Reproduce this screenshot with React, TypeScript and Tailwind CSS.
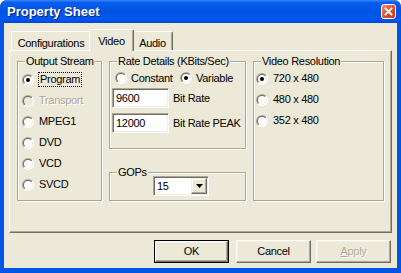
import React from "react";

const FONT = "font-['Liberation_Sans',Arial,sans-serif] text-[11px] tracking-[-0.3px] text-black";

function Radio({ checked, disabled }: { checked?: boolean; disabled?: boolean }) {
  return (
    <svg width="12" height="12" viewBox="0 0 12 12" className="shrink-0">
      <circle cx="6" cy="6" r="6" fill="url(#radioOuter)" />
      <circle cx="6" cy="6" r="5" fill="url(#radioInner)" />
      <circle cx="6" cy="6" r="4" fill={disabled ? "#ECE9D8" : "#FFFFFF"} />
      {checked && <circle cx="6" cy="6" r="2" fill="#000" />}
    </svg>
  );
}

function RadioRow({
  label,
  checked,
  disabled,
  focused,
}: {
  label: string;
  checked?: boolean;
  disabled?: boolean;
  focused?: boolean;
}) {
  return (
    <div className="flex h-[21px] items-center">
      <Radio checked={checked} disabled={disabled} />
      <span
        className={
          "ml-[5px] leading-[13px] " +
          (disabled ? "text-[#ACA899] [text-shadow:1px_1px_0_#fff]" : "") +
          (focused ? " outline outline-1 outline-dotted outline-black px-[1px] -ml-[-4px]" : "")
        }
      >
        {label}
      </span>
    </div>
  );
}

function Group({
  label,
  className,
  children,
}: {
  label: string;
  className: string;
  children?: React.ReactNode;
}) {
  return (
    <div
      className={
        "relative border border-[#ACA899] shadow-[inset_1px_1px_0_#fff,1px_1px_0_#fff] " + className
      }
    >
      {/* caption sits over the top edge */}
      <span className="absolute -top-[7px] left-[7px] bg-[#ECE9D8] px-[1px] leading-[13px]">
        {label}
      </span>
      {children}
    </div>
  );
}

function Edit({ value }: { value: string }) {
  return (
    <div className="flex h-[20px] w-[57px] items-center border border-t-[#ACA899] border-l-[#ACA899] border-b-white border-r-white bg-white pl-[3px] shadow-[inset_1px_1px_0_#716F64,inset_-1px_-1px_0_#F1EFE2]">
      {value}
    </div>
  );
}

function Button({
  label,
  isDefault,
  disabled,
}: {
  label: React.ReactNode;
  isDefault?: boolean;
  disabled?: boolean;
}) {
  return (
    <div className={"h-[23px] w-[75px] " + (isDefault ? "border border-black" : "")}>
      <div className="flex h-full w-full items-center justify-center border border-t-white border-l-white border-b-[#716F64] border-r-[#716F64] bg-[#ECE9D8] shadow-[inset_-1px_-1px_0_#ACA899,inset_1px_1px_0_#F1EFE2]">
        <span className={disabled ? "text-[#ACA899] [text-shadow:1px_1px_0_#fff]" : ""}>{label}</span>
      </div>
    </div>
  );
}

function Tab({ label, active, width }: { label: string; active?: boolean; width: string }) {
  if (active) {
    return (
      <div
        className={
          "relative z-10 -mx-[2px] -mb-[1px] flex h-[22px] items-start justify-center rounded-t-[2px] border-l border-t border-r border-l-white border-t-white border-r-[#716F64] bg-[#ECE9D8] pt-[3px] shadow-[inset_-1px_0_0_#ACA899] " +
          width
        }
      >
        {label}
      </div>
    );
  }
  return (
    <div
      className={
        "flex h-[19px] items-start justify-center rounded-t-[2px] border-l border-t border-r border-l-white border-t-white border-r-[#716F64] bg-[#ECE9D8] pt-[3px] shadow-[inset_-1px_0_0_#ACA899] " +
        width
      }
    >
      {label}
    </div>
  );
}

export default function App() {
  return (
    <div className={"w-[401px] h-[273px] bg-white " + FONT}>
      <svg width="0" height="0" className="absolute">
        <defs>
          <linearGradient id="radioOuter" x1="0" y1="0" x2="1" y2="1">
            <stop offset="0.5" stopColor="#ACA899" />
            <stop offset="0.5" stopColor="#FFFFFF" />
          </linearGradient>
          <linearGradient id="radioInner" x1="0" y1="0" x2="1" y2="1">
            <stop offset="0.5" stopColor="#716F64" />
            <stop offset="0.5" stopColor="#F1EFE2" />
          </linearGradient>
        </defs>
      </svg>

      <div className="flex h-full w-full flex-col overflow-hidden rounded-t-[7px] bg-[#0055E5]">
        {/* Title bar */}
        <div className="flex h-[23px] shrink-0 items-center bg-[linear-gradient(to_bottom,#3A8CFF_0%,#0A5EEF_10%,#0054E3_45%,#0058EE_85%,#0046D5_100%)] pl-[7px] pr-[5px]">
          <span className="font-['Liberation_Sans',Arial,sans-serif] text-[13px] font-bold tracking-[0px] text-white [text-shadow:1px_1px_0_#0A1E8C]">
            Property Sheet
          </span>
          <div className="ml-auto flex h-[15px] w-[15px] items-center justify-center rounded-[3px] border border-white bg-[linear-gradient(135deg,#F08A6B_0%,#E0512D_50%,#C63A18_100%)]">
            <svg width="9" height="9" viewBox="0 0 9 9">
              <path d="M1.5 1.5 L7.5 7.5 M7.5 1.5 L1.5 7.5" stroke="#fff" strokeWidth="1.8" strokeLinecap="square" />
            </svg>
          </div>
        </div>

        {/* Client area */}
        <div className="mx-[4px] mb-[5px] flex flex-1 flex-col bg-[#ECE9D8] pl-[5px] pr-[5px] pt-[6px]">
          {/* Tabs */}
          <div className="flex h-[21px] items-end pl-[2px]">
            <Tab label="Configurations" width="w-[80px]" />
            <Tab label="Video" width="w-[45px]" active />
            <Tab label="Audio" width="w-[41px]" />
          </div>

          {/* Tab panel */}
          <div className="flex h-[183px] border border-t-white border-l-white border-b-[#716F64] border-r-[#716F64] pl-[7px] pt-[10px] shadow-[inset_-1px_-1px_0_#ACA899]">
            <Group label="Output Stream" className="h-[140px] w-[85px] pl-[4px] pt-[7px]">
              <RadioRow label="Program" checked focused />
              <RadioRow label="Transport" disabled />
              <RadioRow label="MPEG1" />
              <RadioRow label="DVD" />
              <RadioRow label="VCD" />
              <RadioRow label="SVCD" />
            </Group>

            <div className="ml-[7px] flex w-[137px] flex-col">
              <Group label="Rate Details (KBits/Sec)" className="h-[88px] w-[137px] pl-[2px] pt-[6px]">
                <div className="flex h-[20px] items-center pl-[3px]">
                  <div className="flex w-[65px] items-center">
                    <Radio />
                    <span className="ml-[4px]">Constant</span>
                  </div>
                  <Radio checked />
                  <span className="ml-[4px]">Variable</span>
                </div>
                <div className="flex items-center">
                  <Edit value="9600" />
                  <span className="ml-[4px]">Bit Rate</span>
                </div>
                <div className="mt-[5px] flex items-center">
                  <Edit value="12000" />
                  <span className="ml-[4px]">Bit Rate PEAK</span>
                </div>
              </Group>

              <Group label="GOPs" className="mt-[23px] h-[29px] w-[137px] pl-[43px] pt-[3px]">
                <div className="flex h-[20px] w-[56px] items-center border border-t-[#ACA899] border-l-[#ACA899] border-b-white border-r-white bg-white shadow-[inset_1px_1px_0_#716F64,inset_-1px_-1px_0_#F1EFE2]">
                  <span className="ml-[3px] flex-1">15</span>
                  <div className="mr-[1px] flex h-[16px] w-[16px] items-center justify-center border border-t-[#F1EFE2] border-l-[#F1EFE2] border-b-[#716F64] border-r-[#716F64] bg-[#ECE9D8] shadow-[inset_-1px_-1px_0_#ACA899,inset_1px_1px_0_#fff]">
                    <svg width="7" height="4" viewBox="0 0 7 4">
                      <path d="M0 0 H7 L3.5 4 Z" fill="#000" />
                    </svg>
                  </div>
                </div>
              </Group>
            </div>

            <Group label="Video Resolution" className="ml-[7px] h-[140px] w-[131px] pl-[2px] pt-[6px]">
              <RadioRow label="720 x 480" checked />
              <RadioRow label="480 x 480" />
              <RadioRow label="352 x 480" />
            </Group>
          </div>

          {/* Buttons */}
          <div className="mt-[7px] flex justify-end pr-[1px]">
            <Button label="OK" isDefault />
            <div className="ml-[7px]">
              <Button label="Cancel" />
            </div>
            <div className="ml-[5px]">
              <Button
                label={
                  <>
                    <span className="underline">A</span>pply
                  </>
                }
                disabled
              />
            </div>
          </div>
        </div>
      </div>
    </div>
  );
}
